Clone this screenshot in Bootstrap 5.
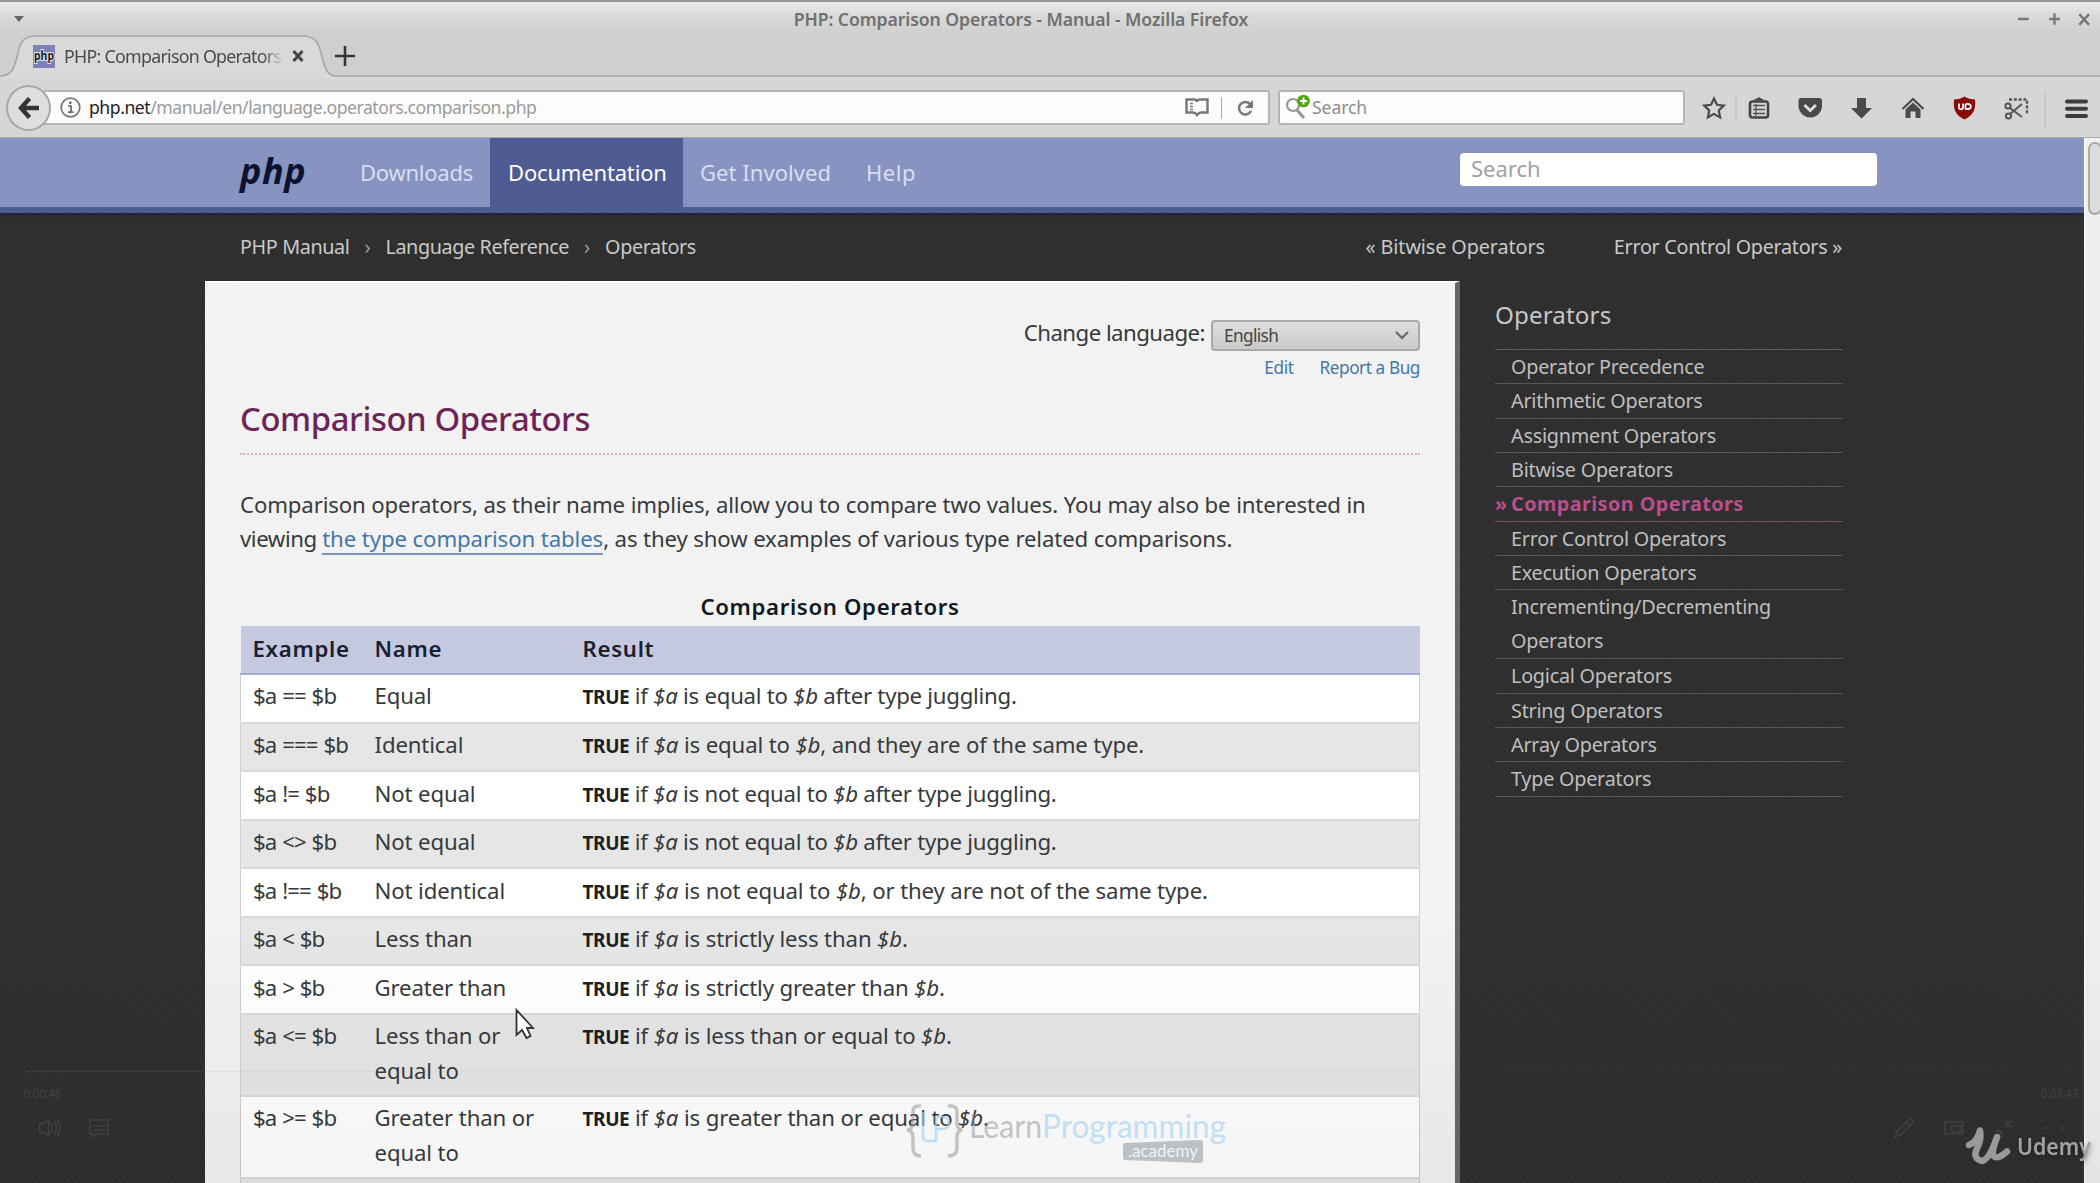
<!DOCTYPE html>
<html lang="en">
<head>
<meta charset="utf-8">
<title>PHP: Comparison Operators - Manual</title>
<link href="https://cdn.jsdelivr.net/npm/bootstrap@5.3.0/dist/css/bootstrap.min.css" rel="stylesheet">
<style>
body{margin:0;width:2100px;height:1183px;overflow:hidden;background:#303030;font-family:"Noto Sans","Open Sans",sans-serif;font-size:22.2px;line-height:34.3px;letter-spacing:-.13px;color:#373a3c;white-space:nowrap}
a{text-decoration:none}
svg{display:block;flex:none}
/* window chrome */
.win-head{height:77px;border-top:2px solid #969696;background:linear-gradient(#ececec,#d9d9d9 14px,#cfcfcf 34px,#cfcfcf)}
.win-title{height:33px;padding:0 9px 0 14px}
.win-title b{font-size:17.6px;font-weight:600;letter-spacing:-.06px;color:#707070;line-height:34px;padding-left:1px}
.tab-strip{height:42px}
.tab-box{width:356px;height:43px}
.tab-box>svg{position:absolute;left:0;top:0}
.tab-in{position:relative;padding:2px 0 0 33px;height:40px}
.fav-icon{width:22px;height:23px;background:#8080b8}
.tab-label{width:220px;flex:none;margin-left:9px;overflow:hidden;font-size:17.8px;letter-spacing:-.72px;color:#4a4a4a;line-height:36px;-webkit-mask-image:linear-gradient(90deg,#000 200px,transparent 219px)}
.new-tab{margin-left:31px}
.tool-row{height:61px;background:#d6d6d6;border-bottom:1px solid #ababab;padding-top:1px}
.back-btn{width:45px;height:46px;border:2px solid #a8a8a8;border-radius:50%;background:#dedede;margin-left:6px;z-index:1}
.url-box{width:1227px;height:35px;margin-left:-8px;background:#fcfcfc;border:2px solid #b5b5b5;border-radius:2px;padding:0 14px 0 15px;font-size:17.6px;letter-spacing:-.45px;color:#9a9a9a}
.url-box em{font-style:normal;color:#222}
.find-box{width:407px;height:35px;margin-left:8px;background:#fcfcfc;border:2px solid #b5b5b5;border-radius:3px;padding-left:6px;font-size:17.6px;letter-spacing:-.1px;color:#8e8e8e}
.v-rule{width:1px;height:22px;margin:0 14px 0 12px;background:#aaa}
.tool-icons{padding-left:17px}
/* site */
.site{width:2084px;height:1045px;overflow:hidden;background:repeating-linear-gradient(45deg,#2d2d2d 0 2px,#313131 2px 4px)}
.site-nav{height:75px;background:#8793c1;border-bottom:6px solid #4f5b93;box-shadow:0 1px 4px #1b1f3a}
.site-nav a{color:#d9def3;height:69px;line-height:68px;padding:0 17px;font-size:22px;letter-spacing:-.25px}
.site-nav a.on{color:#fff;background:#4f5b93;width:193px;padding-left:18px;letter-spacing:-.17px}
.site-nav a.first-link{width:147px;padding-right:13px}
.site-nav a.third-link{width:166px;letter-spacing:.05px}
.site-nav a.fourth-link{letter-spacing:.5px}
.php-mark{font-size:36px;font-weight:700;font-style:italic;color:#0c1330;letter-spacing:.6px;width:103px;margin-left:240px;line-height:66px}
.site-find{width:417px;height:33px;margin:15px 207px 0 auto;border-radius:4px;background:#fff;color:#a2a2a2;padding-left:11px;line-height:31px;font-size:22px;letter-spacing:0}
.crumbs{height:68px;padding:0 242px 0 240px;font-size:19.8px;color:#c9c9c9}
.crumbs span{display:block;letter-spacing:-.4px}
.crumbs .prev-link{letter-spacing:-.1px}
.crumbs .next-link{margin-left:69px;letter-spacing:-.3px}
.crumbs i{font-style:normal;color:#999;width:36px;text-align:center}
.page-main{width:1255px;height:905px;margin-left:205px;background:#f2f2f2;border-top:2px solid #fff;border-right:5px solid #666;padding:34px 35px 0}
.lang-row{height:36px}
.lang-row span{letter-spacing:-.52px;margin-right:6px;line-height:31px}
.lang-sel{width:209px;height:31px;border:2px solid #a9a9a9;border-radius:4px;background:linear-gradient(#dedede,#cacaca);font-size:17.2px;letter-spacing:-.6px;color:#444;padding:0 9px 0 11px;line-height:28px;margin-top:3px}
.tiny-links{gap:26px;font-size:17.2px;letter-spacing:-.42px;line-height:30px;height:30px}
.tiny-links a,.body-link{color:#4477a8}
.body-link{border-bottom:2px solid #7e95ba;letter-spacing:-.1px;display:inline-block;line-height:29px}
.lead-in{letter-spacing:-.4px}
.page-main h1{font-size:32.8px;font-weight:500;color:#6f2458;letter-spacing:-.4px;line-height:44px;margin:14px 0 0;height:58px;border-bottom:2px dotted #d3b3bb}
.intro{margin:33px 0 0;height:101px}
.op-table{width:1180px;border-collapse:collapse;caption-side:top}
.op-table caption{caption-side:top;padding:0 0 1px;text-align:center;color:#111a20;font-weight:600;line-height:36px;letter-spacing:.65px}
.op-table th{background:#c4c9df;color:#1a2030;font-weight:600;letter-spacing:.7px;height:48px;padding:0 12px;border-bottom:2px solid #a6add0}
.op-table td{background:#fff;padding:4.4px 12px 6.9px;line-height:34.3px;border-bottom:2px solid #d9d9d9;vertical-align:top}
.op-table tbody tr{height:48.5px}
.op-table tr:nth-child(even) td{background:#e6e6e6}
.op-table td:first-child{letter-spacing:-.85px;word-spacing:.8px;border-left:1px solid #d0d0d0}
.op-table td:last-child{border-right:1px solid #d0d0d0}
.op-table td.snug{letter-spacing:-.25px}
.op-table td b{font-size:19px;font-weight:700;letter-spacing:-.4px;color:#1c1f24}
.side-nav{width:348px;margin:17px 0 0 35px;font-size:19.8px;color:#bfbfbf;letter-spacing:-.23px}
.side-nav h2{font-size:24.2px;font-weight:400;color:#c6c6c6;letter-spacing:.1px;line-height:34px;height:51px;margin:0}
.side-nav ul{border-top:1px solid #5c5c5c;margin:0}
.side-nav li{line-height:33.35px;padding-left:16px;border-bottom:1px solid #555}
.side-nav li.two{line-height:33.9px}
.side-nav li.here{font-weight:700;color:#b8508c;border-color:#80466a;letter-spacing:.45px;padding-left:0;display:flex}
.side-nav li.here s{text-decoration:none;width:16px}
.scroll-col{width:16px;height:1045px;background:#efefef;border-left:1px solid #fff}
.scroll-thumb{width:14px;height:73px;margin:4px 0 0 3px;border:2px solid #a9a9a9;border-radius:7px;background:#dcdcdc}
.over-layer{position:absolute;left:0;top:0;pointer-events:none}
.shade{position:absolute;left:0;top:920px;width:2100px;height:263px;background:linear-gradient(transparent,rgba(0,0,0,.045))}
</style>
</head>
<body class="position-relative">
<header class="win-head">
  <div class="win-title d-flex align-items-center justify-content-between">
    <svg width="10" height="8" viewBox="0 0 10 8"><path d="M0 1h10L5 7z" fill="#666"/></svg>
    <b>PHP: Comparison Operators - Manual - Mozilla Firefox</b>
    <svg width="74" height="14" viewBox="0 0 76 14" fill="none" stroke="#777" stroke-width="2.4"><path d="M1 7h11M33 7h11M38.5 1v12M64 2l10 11M74 2L64 13"/></svg>
  </div>
  <div class="tab-strip d-flex">
    <div class="tab-box position-relative">
      <svg width="2100" height="43" viewBox="0 0 2100 43"><path d="M0 41C12 41 14 33 17 22 20 8 22 1 36 1H302C316 1 319 8 322 22 325 34 328 41 336 41H2100V43H0z" fill="#d9d9d9"/><path d="M0 41C12 41 14 33 17 22 20 8 22 1 36 1H302C316 1 319 8 322 22 325 34 328 41 336 41H2100" fill="none" stroke="#a6a6a6" stroke-width="1.6"/></svg>
      <div class="tab-in d-flex align-items-center">
        <svg class="fav-icon" viewBox="0 0 22 23"><text x="1" y="15" font-size="13" font-weight="700" textLength="20" lengthAdjust="spacingAndGlyphs" fill="#222" stroke="#e8e8f5" stroke-width="2" paint-order="stroke" letter-spacing="0">php</text></svg>
        <div class="tab-label">PHP: Comparison Operators</div>
        <svg class="ms-2" width="12" height="12" viewBox="0 0 12 12"><path d="M1.500 1l9 10M10.500 1l-9 10" stroke="#444" stroke-width="3"/></svg>
        <svg class="new-tab" width="20" height="20" viewBox="0 0 20 20"><path d="M10 0v20M0 10h20" stroke="#333" stroke-width="2.600"/></svg>
      </div>
    </div>
  </div>
</header>
<div class="tool-row d-flex align-items-center">
  <div class="back-btn d-flex align-items-center justify-content-center position-relative">
    <svg width="22" height="22" viewBox="0 0 22 22"><path d="M11.500 1.500L3 11l8.500 9.500M3 11h18" fill="none" stroke="#333" stroke-width="4.400"/></svg>
  </div>
  <div class="url-box d-flex align-items-center">
    <svg width="21" height="21" viewBox="0 0 21 21"><circle cx="10.500" cy="10.500" r="9.300" fill="none" stroke="#777" stroke-width="1.700"/><path d="M8 9h3v6M8 15.200h5.500" stroke="#666" stroke-width="1.700" fill="none"/><circle cx="10.300" cy="5.800" r="1.400" fill="#666"/></svg>
    <span class="ms-2"><em>php.net</em>/manual/en/language.operators.comparison.php</span>
    <svg class="ms-auto" width="24" height="19" viewBox="0 0 24 19" fill="none" stroke="#777" stroke-width="2.400"><path d="M12 17c-1.500-2-3-2.500-4-2.500H1.500v-13H9c2 0 3 1 3 2.500 0-1.500 1-2.500 3-2.500h7.500v13H16c-1 0-2.500.5-4 2.500z"/><path d="M5 5.500h3M5 8.500h3M5 11.500h3" stroke-width="1.400"/></svg>
    <div class="v-rule"></div>
    <svg width="18" height="18" viewBox="0 0 18 18"><path d="M14 5a6.300 6.300 0 1 0 1 7" fill="none" stroke="#777" stroke-width="2.500"/><path d="M17 1v8H9z" fill="#777"/></svg>
  </div>
  <div class="find-box d-flex align-items-center">
    <svg width="26" height="27" viewBox="0 0 26 27"><circle cx="7" cy="11" r="6" fill="none" stroke="#999" stroke-width="2.200"/><path d="M11 16l7 8" stroke="#999" stroke-width="3"/><circle cx="17.500" cy="7" r="6.300" fill="#4fa810"/><path d="M17.500 3.500v7M14 7h7" stroke="#fff" stroke-width="2"/></svg>
    <span>Search</span>
  </div>
  <div class="tool-icons">
    <svg width="396" height="40" viewBox="1702 87 396 40">
      <path d="M1714 97.500l3 6.300 6.800.8-5 4.800 1.300 7-6.100-3.500-6.100 3.500 1.300-7-5-4.800 6.800-.8z" fill="none" stroke="#4a4a4a" stroke-width="2.200"/>
      <path d="M1736 95v24M2045 90v37" stroke="#bcbcbc"/>
      <rect x="1750" y="100.500" width="18" height="16" rx="2.500" fill="none" stroke="#444" stroke-width="2.600"/><path d="M1754 99.500c0-1.500 3-1.500 5-3.500 2 2 5 2 5 3.500z" fill="#444"/><path d="M1753 104.500h12M1753 108.500h12M1753 112.500h12M1756 103v12" stroke="#555" stroke-width="1.300"/>
      <path d="M1801 97h18q3 0 3 3v6a11.800 11.500 0 0 1-23.500 0v-6q0-3 2.500-3z" fill="#4a4a4a"/><path d="M1804.500 104l5.700 5.500 5.700-5.500" stroke="#ddd" stroke-width="2.800" fill="none"/>
      <path d="M1857 97h9v10h6l-10.500 10.500L1851 107h6z" fill="#4a4a4a"/>
      <path d="M1902.500 108L1913 98l10.500 10" fill="none" stroke="#4a4a4a" stroke-width="2.200"/><path d="M1905.500 108.500l7.500-7 7.500 7v8.500h-5v-6.500h-5v6.500h-5z" fill="#4a4a4a"/>
      <path d="M1964.500 95.500c3 2 6.500 3 10.500 3 1 9-1 15.500-10.500 20-9.500-4.500-11.500-11-10.500-20 4 0 7.500-1 10.500-3z" fill="#8a0a0a"/><path d="M1959 102.500v4.500q2 3 4 0v-4.500M1965.500 103v5q5.500.5 5.500-2.500t-5.500-2.500" fill="none" stroke="#fff" stroke-width="1.700"/>
      <path d="M2009 98.500h18v14" fill="none" stroke="#555" stroke-width="2.400" stroke-dasharray="3 1.800"/><g fill="none" stroke="#555" stroke-width="2"><circle cx="2008" cy="105" r="2.600"/><circle cx="2008.500" cy="115" r="2.600"/><path d="M2010 107l12 9M2010 113l12-10"/></g>
      <path d="M2067 100.500h19M2067 107.700h19M2067 115h19" stroke="#3c3c3c" stroke-width="4" stroke-linecap="round"/>
    </svg>
  </div>
</div>
<div class="d-flex">
  <div class="site">
    <nav class="site-nav d-flex position-relative">
      <div class="php-mark">php</div>
      <a href="#" class="first-link">Downloads</a>
      <a href="#" class="on">Documentation</a>
      <a href="#" class="third-link">Get Involved</a>
      <a href="#" class="fourth-link">Help</a>
      <div class="site-find">Search</div>
    </nav>
    <div class="crumbs d-flex align-items-center">
      <span>PHP Manual</span><i>›</i><span>Language Reference</span><i>›</i><span>Operators</span>
      <span class="prev-link ms-auto">« Bitwise Operators</span><span class="next-link">Error Control Operators »</span>
    </div>
    <div class="d-flex">
      <main class="page-main">
        <div class="lang-row d-flex justify-content-end">
          <span>Change language:</span>
          <div class="lang-sel d-flex align-items-center justify-content-between">English
            <svg width="14" height="9" viewBox="0 0 14 9"><path d="M1 1l6 6 6-6" fill="none" stroke="#666" stroke-width="2.200"/></svg>
          </div>
        </div>
        <div class="tiny-links d-flex justify-content-end"><a href="#">Edit</a><a href="#">Report a Bug</a></div>
        <h1>Comparison Operators</h1>
        <p class="intro">Comparison operators, as their name implies, allow you to compare two values. You may also be interested in<br><span class="lead-in">viewing </span><a href="#" class="body-link">the type comparison tables</a>, as they show examples of various type related comparisons.</p>
        <table class="op-table">
          <caption>Comparison Operators</caption>
          <colgroup><col style="width:122px"><col style="width:208px"><col></colgroup>
          <thead><tr><th>Example</th><th>Name</th><th>Result</th></tr></thead>
          <tbody>
            <tr><td>$a == $b</td><td>Equal</td><td class="snug"><b>TRUE</b> if <i>$a</i> is equal to <i>$b</i> after type juggling.</td></tr>
            <tr><td>$a === $b</td><td>Identical</td><td><b>TRUE</b> if <i>$a</i> is equal to <i>$b</i>, and they are of the same type.</td></tr>
            <tr><td>$a != $b</td><td>Not equal</td><td class="snug"><b>TRUE</b> if <i>$a</i> is not equal to <i>$b</i> after type juggling.</td></tr>
            <tr><td>$a &lt;&gt; $b</td><td>Not equal</td><td class="snug"><b>TRUE</b> if <i>$a</i> is not equal to <i>$b</i> after type juggling.</td></tr>
            <tr><td>$a !== $b</td><td>Not identical</td><td><b>TRUE</b> if <i>$a</i> is not equal to <i>$b</i>, or they are not of the same type.</td></tr>
            <tr><td>$a &lt; $b</td><td>Less than</td><td><b>TRUE</b> if <i>$a</i> is strictly less than <i>$b</i>.</td></tr>
            <tr><td>$a &gt; $b</td><td>Greater than</td><td><b>TRUE</b> if <i>$a</i> is strictly greater than <i>$b</i>.</td></tr>
            <tr><td>$a &lt;= $b</td><td>Less than or<br>equal to</td><td><b>TRUE</b> if <i>$a</i> is less than or equal to <i>$b</i>.</td></tr>
            <tr><td>$a &gt;= $b</td><td>Greater than or<br>equal to</td><td><b>TRUE</b> if <i>$a</i> is greater than or equal to <i>$b</i>.</td></tr>
            <tr><td></td><td></td><td></td></tr>
          </tbody>
        </table>
      </main>
      <aside class="side-nav">
        <h2>Operators</h2>
        <ul class="list-unstyled">
          <li>Operator Precedence</li><li>Arithmetic Operators</li><li>Assignment Operators</li><li>Bitwise Operators</li>
          <li class="here"><s>»</s>Comparison Operators</li>
          <li>Error Control Operators</li><li>Execution Operators</li><li class="two">Incrementing/Decrementing<br>Operators</li>
          <li>Logical Operators</li><li>String Operators</li><li>Array Operators</li><li>Type Operators</li>
        </ul>
      </aside>
    </div>
  </div>
  <div class="scroll-col"><div class="scroll-thumb"></div></div>
</div>
<div class="shade"></div>
<svg class="over-layer" width="2100" height="1183" viewBox="0 0 2100 1183" letter-spacing="0">
  <path d="M516.500 1010v25l5.500-5 4.500 8 4-2-3.500-8h6z" fill="#fff" stroke="#333" stroke-width="1.800"/>
  <!-- faded player controls -->
  <path d="M25 1071.500H370" stroke="#7fb0d8" stroke-opacity=".13" stroke-width="1.500"/><path d="M370 1071.500H2075" stroke="#888" stroke-opacity=".05"/>
  <g fill="none" stroke="#404040" stroke-width="1.500">
    <path d="M39.500 1123.500h4l5-4v17l-5-4h-4zM51 1123q3 5 0 10M54 1121q5 7 0 14M57 1119q6 9 0 18"/>
    <path d="M90 1120h18v14H97l-4 3v-3h-3zM94 1126h11M94 1130h11"/>
    <path d="M1895 1137l2-6 13-12q3 0 3 4l-13 12zM1907 1122l4 4"/>
    <rect x="1945" y="1122" width="18" height="12"/><rect x="1952" y="1126" width="9" height="6"/>
    <path d="M2013 1119l-7 7M2006 1120v6h6M1996 1137l6-6M1996 1131h6v6"/>
  </g>
  <g fill="#424242"><circle cx="2046" cy="1128" r="1.300"/><circle cx="2054" cy="1128" r="1.300"/><circle cx="2062" cy="1128" r="1.300"/>
  <text x="24" y="1098" font-size="13" textLength="37" lengthAdjust="spacingAndGlyphs">0:00:46</text><text x="2041" y="1098" font-size="13" textLength="37" lengthAdjust="spacingAndGlyphs">0:03:43</text></g>
  <!-- channel mark -->
  <g fill="none" stroke="#8c8f94" stroke-opacity=".5" stroke-width="3.500"><path d="M921 1106q-8-1-8 6v11q0 6-6 7 6 1 6 7v11q0 8 8 8M948 1106q9-1 9 6v11q0 6 5 7-5 1-5 7v11q0 8-9 8"/></g>
  <path d="M923 1112v24q0 5 5 5h8v-24h6q7 0 7 6t-7 6h-6" fill="none" stroke="#a4d0f2" stroke-opacity=".65" stroke-width="2.500"/>
  <g font-family="Lato,sans-serif" font-weight="400">
    <text x="969" y="1138" font-size="33" textLength="73" lengthAdjust="spacingAndGlyphs" fill="#8c8f94" fill-opacity=".5">Learn</text>
    <text x="1042" y="1138" font-size="33" textLength="184" lengthAdjust="spacingAndGlyphs" fill="#a4d0f2" fill-opacity=".65">Programming</text>
    <path d="M1125 1143l75-3q3 0 3 3v17q0 3-3 3l-75-3q-2 0-2-3v-12q0-2 2-2z" fill="#a9aeb3" fill-opacity=".75"/>
    <text x="1128" y="1157" font-size="18" textLength="70" lengthAdjust="spacingAndGlyphs" fill="#f0f4f8">.academy</text>
  </g>
  <path d="M1969 1145q8-3 11-14.500q2 8-3 18t5 12.500q7-1 15-24q-6 16-3 19.500 4 3 13-5" fill="none" stroke="#999" stroke-width="6.500" stroke-linecap="round" stroke-linejoin="round"/>
  <text x="2017" y="1155" font-size="23" font-weight="600" textLength="74" lengthAdjust="spacingAndGlyphs" fill="#a2a2a2" style="filter:drop-shadow(1px 2px 2px rgba(0,0,0,.35))">Udemy</text>
</svg>
<script src="https://cdn.jsdelivr.net/npm/bootstrap@5.3.0/dist/js/bootstrap.bundle.min.js"></script>
</body>
</html>
